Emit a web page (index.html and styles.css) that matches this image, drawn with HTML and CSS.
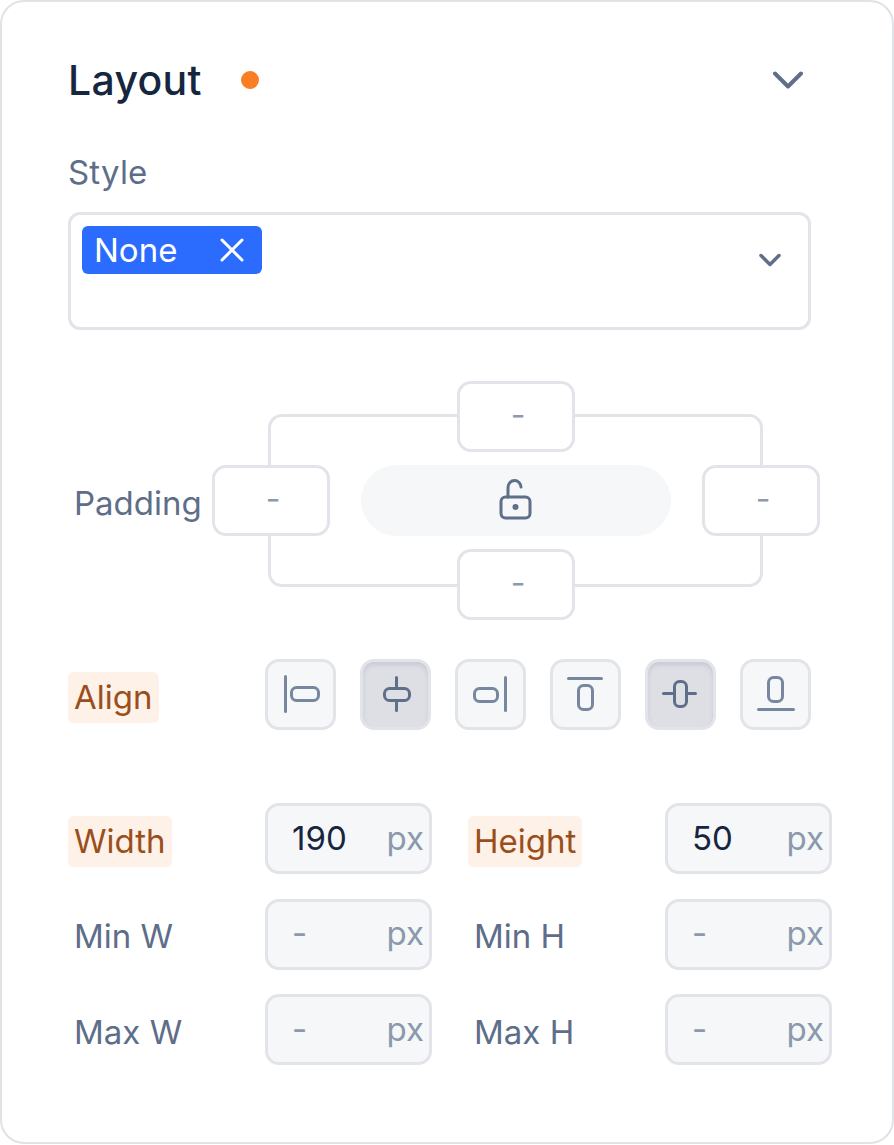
FILE: index.html
```html
<!DOCTYPE html>
<html lang="en">
<head>
  <meta charset="UTF-8">
  <meta name="viewport" content="width=device-width, initial-scale=1.0">
  <title>Layout</title>
  <link rel="stylesheet" href="styles.css">
</head>
<body>
  <div class="panel">
    <div class="panel-header">
      <h2>Layout</h2>
      <span class="dot"></span>
      <svg class="panel-chevron" width="30" height="18" viewBox="0 0 30 18"><path d="M2 2.5 15 15.5 28 2.5"/></svg>
    </div>

    <div class="style-label">Style</div>
    <div class="select">
      <span class="tag">None
        <svg width="24" height="24" viewBox="0 0 24 24"><path d="M2 2 22 22M22 2 2 22"/></svg>
      </span>
      <svg class="select-chevron" width="22" height="14" viewBox="0 0 22 14"><path d="M2 2.5 11 11.5 20 2.5"/></svg>
    </div>

    <div class="padding-row">
      <span class="label">Padding</span>
      <div class="padding-box">
        <div class="padding-frame"></div>
        <div class="box box-top">-</div>
        <div class="box box-left">-</div>
        <div class="lock">
          <svg width="34" height="42" viewBox="0 0 34 42">
            <path d="M9 19V9.500C9 5.500 12 2.500 15.500 2.500C19 2.500 22 5.500 22 9"/>
            <rect x="2" y="19" width="29" height="21" rx="4.500"/>
            <circle cx="16.500" cy="29" r="3"/>
          </svg>
        </div>
        <div class="box box-right">-</div>
        <div class="box box-bottom">-</div>
      </div>
    </div>

    <div class="align-row">
      <span class="label changed">Align</span>
      <div class="align-buttons">
        <button type="button" class="align-btn">
          <svg width="40" height="40" viewBox="0 0 40 40"><path d="M4.500 1.500V36.500"/><rect x="10.500" y="12.500" width="27" height="13" rx="5"/></svg>
        </button>
        <button type="button" class="align-btn active">
          <svg width="40" height="40" viewBox="0 0 40 40"><path d="M20.500 2.500V13.500M20.500 25.500V35.500"/><rect x="8.500" y="13.500" width="25" height="12" rx="5"/></svg>
        </button>
        <button type="button" class="align-btn">
          <svg width="40" height="40" viewBox="0 0 40 40"><path d="M34.500 2.500V35.500"/><rect x="3.500" y="13.500" width="23" height="13" rx="5"/></svg>
        </button>
        <button type="button" class="align-btn">
          <svg width="40" height="40" viewBox="0 0 40 40"><path d="M2.500 3.500H35.500"/><rect x="12.500" y="10.500" width="14" height="24" rx="5"/></svg>
        </button>
        <button type="button" class="align-btn active">
          <svg width="40" height="40" viewBox="0 0 40 40"><path d="M2.500 18.500H13.500M25.500 18.500H34.500"/><rect x="13.500" y="6.500" width="12" height="25" rx="5"/></svg>
        </button>
        <button type="button" class="align-btn">
          <svg width="40" height="40" viewBox="0 0 40 40"><path d="M2.500 34.500H37.500"/><rect x="12.500" y="2.500" width="14" height="24" rx="5"/></svg>
        </button>
      </div>
    </div>

    <div class="size-grid">
      <span class="label changed">Width</span>
      <div class="size-input"><span class="value">190</span><span class="unit">px</span></div>
      <span class="label changed">Height</span>
      <div class="size-input"><span class="value">50</span><span class="unit">px</span></div>

      <span class="label">Min W</span>
      <div class="size-input"><span class="value empty">-</span><span class="unit">px</span></div>
      <span class="label">Min H</span>
      <div class="size-input"><span class="value empty">-</span><span class="unit">px</span></div>

      <span class="label">Max W</span>
      <div class="size-input"><span class="value empty">-</span><span class="unit">px</span></div>
      <span class="label">Max H</span>
      <div class="size-input"><span class="value empty">-</span><span class="unit">px</span></div>
    </div>
  </div>
</body>
</html>
```

FILE: styles.css
```css
body {
  margin: 0;
  background-color: #fff;
  font-family: Inter, "Noto Sans", sans-serif;
  color: #5e6e89;
}

svg {
  display: block;
  fill: none;
  stroke: #5f6f89;
  stroke-linecap: round;
  stroke-linejoin: round;
}

.panel {
  box-sizing: border-box;
  width: 894px;
  height: 1144px;
  padding: 54px 0 0 66px;
  background-color: #fff;
  border: 2px solid #dfe2e7;
  border-radius: 24px;
}

.panel-header {
  display: flex;
  align-items: center;
  width: 735px;
  height: 48px;
}

h2 {
  margin: 0;
  font-size: 41px;
  font-weight: 500;
  letter-spacing: 0.300px;
  line-height: 48px;
  color: #16263f;
}

.dot {
  width: 18px;
  height: 18px;
  margin-left: 39px;
  border-radius: 50%;
  background-color: #fb7d24;
}

.panel-chevron {
  margin-left: auto;
  stroke-width: 4;
}

.style-label {
  margin-top: 48px;
  font-size: 33px;
  letter-spacing: 0.200px;
  line-height: 40px;
}

.select {
  box-sizing: border-box;
  display: flex;
  align-items: flex-start;
  width: 743px;
  height: 118px;
  margin-top: 20px;
  padding: 11px 27px 0 11px;
  border: 3px solid #e2e4ea;
  border-radius: 12px;
}

.tag {
  box-sizing: border-box;
  display: flex;
  align-items: center;
  justify-content: space-between;
  width: 180px;
  height: 48px;
  padding: 0 18px 0 12px;
  border-radius: 6px;
  background-color: #2b6cff;
  color: #fff;
  font-size: 33px;
}

.tag svg {
  stroke: #fff;
  stroke-width: 3;
}

.select-chevron {
  margin: 27px 0 0 auto;
  stroke-width: 3.500;
}

.label {
  justify-self: start;
  margin-top: 5px;
  padding: 0 6px;
  border-radius: 6px;
  font-size: 33px;
  line-height: 51px;
}

.label.changed {
  background-color: #fef1e8;
  color: #9a4f1b;
}

.padding-row {
  display: flex;
  align-items: center;
  margin-top: 51px;
}

.padding-row .label {
  width: 132px;
}

.padding-box {
  position: relative;
  display: grid;
  grid-template-columns: 118px 310px 118px;
  grid-template-rows: 71px 71px 71px;
  column-gap: 31px;
  row-gap: 13px;
}

.padding-frame {
  position: absolute;
  top: 33px;
  right: 57px;
  bottom: 33px;
  left: 56px;
  border: 3px solid #e2e4ea;
  border-radius: 14px;
}

.box {
  position: relative;
  box-sizing: border-box;
  display: flex;
  align-items: center;
  justify-content: center;
  width: 118px;
  padding: 0 0 4px 4px;
  border: 3px solid #e2e4ea;
  border-radius: 14px;
  background-color: #fff;
  color: #8c99ad;
  font-size: 32px;
}

.box-top {
  grid-column: 2;
  grid-row: 1;
  justify-self: center;
}

.box-left {
  grid-column: 1;
  grid-row: 2;
}

.box-right {
  grid-column: 3;
  grid-row: 2;
}

.box-bottom {
  grid-column: 2;
  grid-row: 3;
  justify-self: center;
}

.lock {
  position: relative;
  display: flex;
  align-items: center;
  justify-content: center;
  grid-column: 2;
  grid-row: 2;
  padding-bottom: 4px;
  border-radius: 36px;
  background-color: #f6f7f9;
}

.lock svg {
  stroke-width: 3;
}

.lock circle {
  fill: #5f6f89;
  stroke: none;
}

.align-row {
  display: grid;
  grid-template-columns: 197px auto;
  align-items: center;
  margin-top: 39px;
}

.align-buttons {
  display: flex;
  gap: 24px;
}

.align-btn {
  box-sizing: border-box;
  display: flex;
  align-items: center;
  justify-content: center;
  width: 71px;
  height: 71px;
  padding: 0;
  border: 3px solid #e2e4ea;
  border-radius: 14px;
  background-color: #f6f7f9;
}

.align-btn svg {
  stroke-width: 3;
  stroke: #7787a0;
}

.align-btn.active {
  background-color: #dddfe5;
  box-shadow: inset 0 3px 4px rgba(100, 110, 130, 0.18);
}

.align-btn.active svg {
  stroke: #5f6f89;
}

.size-grid {
  display: grid;
  grid-template-columns: 161px 167px 161px 167px;
  grid-auto-rows: 71px;
  column-gap: 36px;
  row-gap: 24.500px;
  align-items: center;
  margin-top: 73px;
}

.size-input {
  box-sizing: border-box;
  display: flex;
  align-items: center;
  justify-content: space-between;
  height: 71px;
  padding: 0 5px 2px 24px;
  border: 3px solid #e2e4ea;
  border-radius: 14px;
  background-color: #f6f7f9;
  font-size: 33px;
}

.value {
  color: #16263f;
}

.value.empty {
  color: #8c99ad;
}

.unit {
  color: #8c99ad;
}
```
